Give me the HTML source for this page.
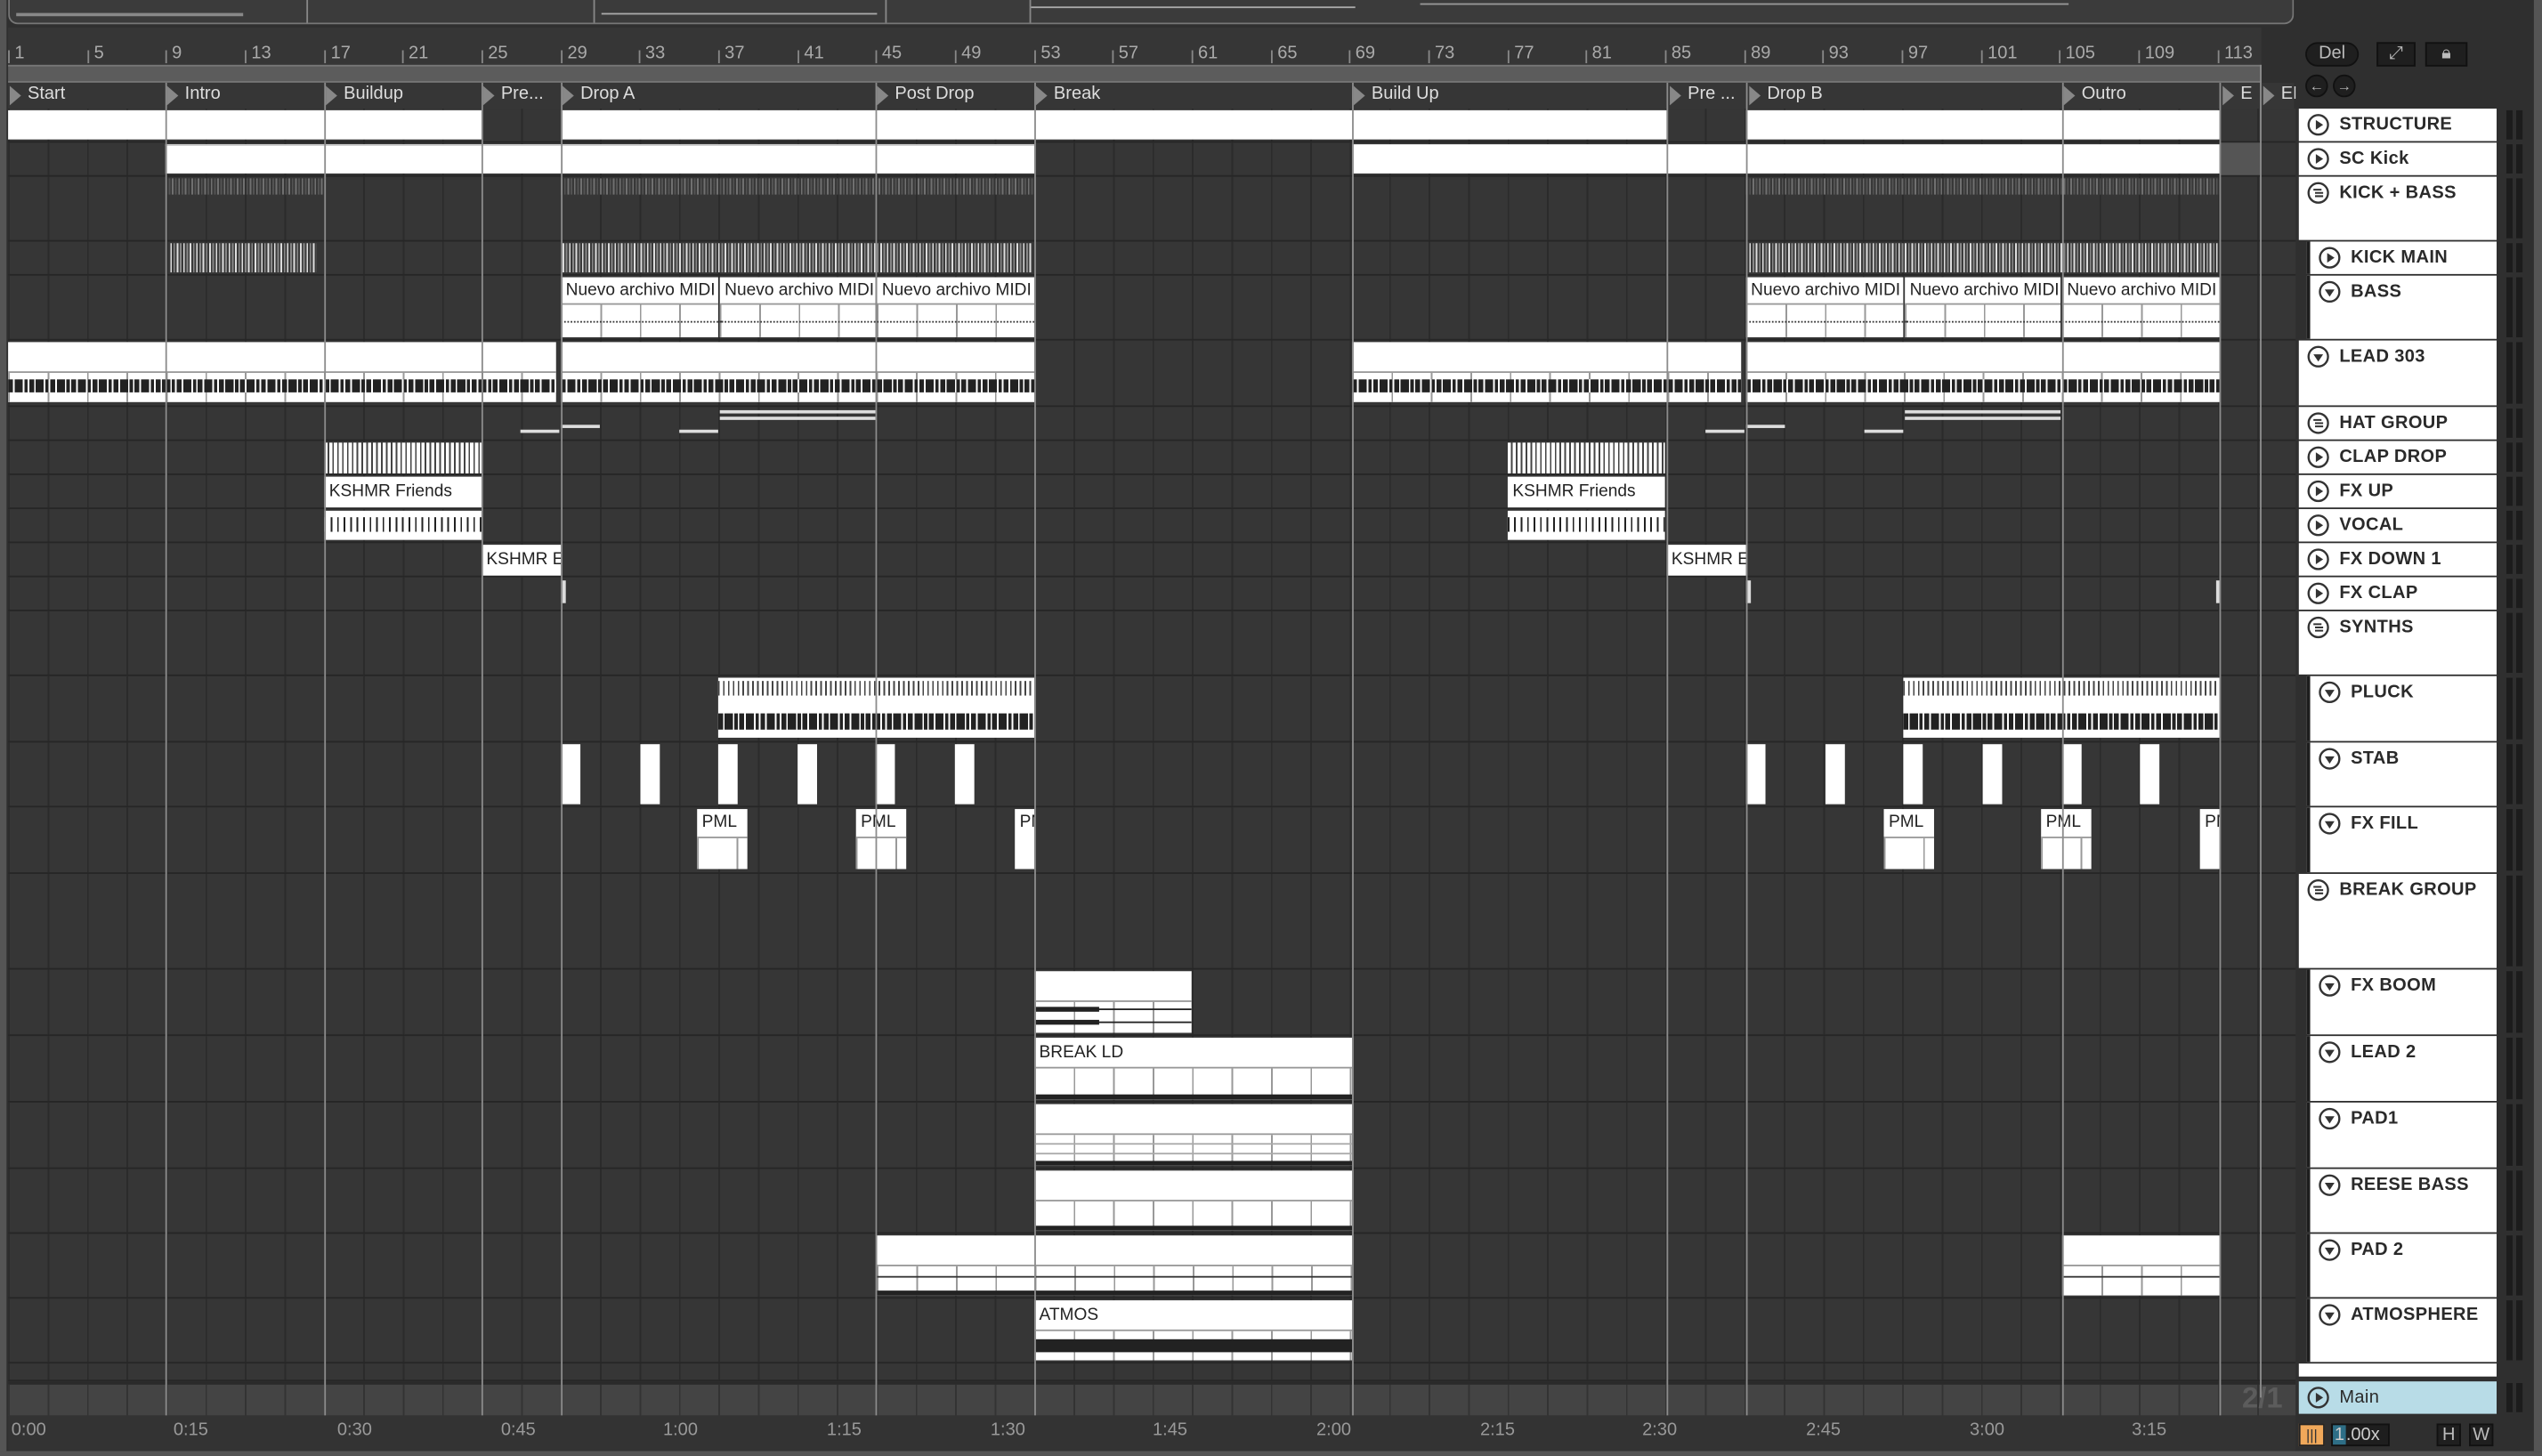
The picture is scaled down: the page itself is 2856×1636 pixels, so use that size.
<!DOCTYPE html>
<html><head><meta charset="utf-8"><style>
*{margin:0;padding:0;box-sizing:border-box}
html,body{width:2856px;height:1636px;overflow:hidden;background:#2a2a2a}
#w{position:absolute;left:0;top:0;width:1568px;height:898px;transform:scale(1.82143,1.8218);transform-origin:0 0;background:#2f2f2f;font-family:"Liberation Sans",sans-serif;overflow:hidden}
.a{position:absolute}
.ov{left:5px;top:0;width:1410px;height:15px;background:#3b3b3b;border:1px solid #777;border-top:none;border-radius:0 0 6px 6px}
.ruler{left:5px;top:17px;width:1390px;height:23px;background:#363636}
.rn{position:absolute;top:10px;font-size:11px;color:#aaa}
.rt{position:absolute;top:14px;width:1px;height:8px;background:#888}
.loop{left:5px;top:40px;width:1390px;height:11px;background:#5c5c5c;border-top:1px solid #777;border-bottom:1px solid #777}
.loc{left:5px;top:51px;width:1410px;height:16px;background:#363636}
.lm{position:absolute;top:0;height:15px;font-size:11px;color:#ddd;padding-left:12px;line-height:15px;white-space:nowrap;overflow:hidden}
.lm:before{content:"";position:absolute;left:1px;top:2px;border-left:7px solid #888;border-top:6px solid transparent;border-bottom:6px solid transparent}
.arr{left:5px;top:67px;width:1411px;height:785px;background:#363636}
.row{position:absolute;left:0;width:1411px;background:repeating-linear-gradient(90deg,#2b2b2b 0 1px,transparent 1px 24.34px);border-bottom:1px solid #262626}
.c{position:absolute;background:#fff;overflow:hidden}
.lb{font-size:10.5px;color:#222;padding:2px 0 0 3px;white-space:nowrap;line-height:12px}
.gl{position:absolute;left:0;right:0;bottom:0;background:repeating-linear-gradient(90deg,#999 0 1px,transparent 1px 24.34px)}
.st{background:repeating-linear-gradient(90deg,#ddd 0 1px,#3a3a3a 1px 2px,#888 2px 3px,#3a3a3a 3px 4px)}
.bc{position:absolute;left:0;right:0;background:repeating-linear-gradient(90deg,#222 0 3px,#fff 3px 4px,#222 4px 9px,#fff 9px 10px,#222 10px 12px,#fff 12px 13px)}
.vl{position:absolute;top:51px;width:1px;height:822px;background:#8c8c8c}
.hd{position:absolute;left:1418px;width:122px;background:#fff;font-size:11px;font-weight:bold;color:#2a2a2a;line-height:20px;letter-spacing:.2px}
.hd svg{position:absolute;left:5px;top:3px}
.hd span{position:absolute;left:25px;top:0}
.in{left:1423px;width:117px;border-left:2px solid #1e1e1e}
.mt{position:absolute;left:1546px;width:10px;background:linear-gradient(90deg,#1c1c1c 0 4px,transparent 4px 6px,#1c1c1c 6px 10px)}
.bt{position:absolute;background:#1f1f1f;border:1px solid #111;color:#bbb;font-size:11px;text-align:center;line-height:13px}
.tl{position:absolute;top:876px;font-size:11px;color:#999}
</style></head><body><div id="w">
<div class="a" style="left:0;top:0;width:4px;height:898px;background:#555"></div>
<div class="a ov">
<div class="a" style="left:183px;top:0;width:178px;height:14px;border-left:1px solid #888;border-right:1px solid #888"></div>
<div class="a" style="left:540px;top:0;width:90px;height:14px;border-left:1px solid #888;border-right:1px solid #888"></div>
<div class="a" style="left:4px;top:8px;width:140px;height:2px;background:#888"></div>
<div class="a" style="left:365px;top:8px;width:170px;height:1px;background:#aaa"></div>
<div class="a" style="left:630px;top:4px;width:200px;height:1px;background:#aaa"></div>
<div class="a" style="left:870px;top:2px;width:400px;height:1px;background:#999"></div>
</div>
<div class="a ruler">
<div class="rt" style="left:0"></div><div class="rn" style="left:4px">1</div>
<div class="rt" style="left:49px"></div><div class="rn" style="left:53px">5</div>
<div class="rt" style="left:97px"></div><div class="rn" style="left:101px">9</div>
<div class="rt" style="left:146px"></div><div class="rn" style="left:150px">13</div>
<div class="rt" style="left:195px"></div><div class="rn" style="left:199px">17</div>
<div class="rt" style="left:243px"></div><div class="rn" style="left:247px">21</div>
<div class="rt" style="left:292px"></div><div class="rn" style="left:296px">25</div>
<div class="rt" style="left:341px"></div><div class="rn" style="left:345px">29</div>
<div class="rt" style="left:389px"></div><div class="rn" style="left:393px">33</div>
<div class="rt" style="left:438px"></div><div class="rn" style="left:442px">37</div>
<div class="rt" style="left:487px"></div><div class="rn" style="left:491px">41</div>
<div class="rt" style="left:535px"></div><div class="rn" style="left:539px">45</div>
<div class="rt" style="left:584px"></div><div class="rn" style="left:588px">49</div>
<div class="rt" style="left:633px"></div><div class="rn" style="left:637px">53</div>
<div class="rt" style="left:681px"></div><div class="rn" style="left:685px">57</div>
<div class="rt" style="left:730px"></div><div class="rn" style="left:734px">61</div>
<div class="rt" style="left:779px"></div><div class="rn" style="left:783px">65</div>
<div class="rt" style="left:827px"></div><div class="rn" style="left:831px">69</div>
<div class="rt" style="left:876px"></div><div class="rn" style="left:880px">73</div>
<div class="rt" style="left:925px"></div><div class="rn" style="left:929px">77</div>
<div class="rt" style="left:973px"></div><div class="rn" style="left:977px">81</div>
<div class="rt" style="left:1022px"></div><div class="rn" style="left:1026px">85</div>
<div class="rt" style="left:1071px"></div><div class="rn" style="left:1075px">89</div>
<div class="rt" style="left:1119px"></div><div class="rn" style="left:1123px">93</div>
<div class="rt" style="left:1168px"></div><div class="rn" style="left:1172px">97</div>
<div class="rt" style="left:1217px"></div><div class="rn" style="left:1221px">101</div>
<div class="rt" style="left:1265px"></div><div class="rn" style="left:1269px">105</div>
<div class="rt" style="left:1314px"></div><div class="rn" style="left:1318px">109</div>
<div class="rt" style="left:1363px"></div><div class="rn" style="left:1367px">113</div>
</div>
<div class="a loop"></div>
<div class="a loc">
<div class="lm" style="left:0;width:97px">Start</div>
<div class="lm" style="left:97px;width:97px">Intro</div>
<div class="lm" style="left:195px;width:97px">Buildup</div>
<div class="lm" style="left:292px;width:49px">Pre...</div>
<div class="lm" style="left:341px;width:194px">Drop A</div>
<div class="lm" style="left:535px;width:98px">Post Drop</div>
<div class="lm" style="left:633px;width:194px">Break</div>
<div class="lm" style="left:829px;width:193px">Build Up</div>
<div class="lm" style="left:1024px;width:49px">Pre ...</div>
<div class="lm" style="left:1073px;width:193px">Drop B</div>
<div class="lm" style="left:1267px;width:97px">Outro</div>
<div class="lm" style="left:1365px;width:24px">E</div>
<div class="lm" style="left:1390px;width:21px">EN</div>
</div>

<div class="a arr">
<div class="row" style="top:0;height:21px"><div class="c" style="left:0;width:292px;top:1px;height:18px"></div><div class="c" style="left:341px;width:682px;top:1px;height:18px"></div><div class="c" style="left:1072px;width:292px;top:1px;height:18px"></div></div>
<div class="row" style="top:21px;height:21px"><div class="c" style="left:97px;width:536px;top:1px;height:18px;border-top:1px solid #ccc"></div><div class="c" style="left:829px;width:535px;top:1px;height:18px"></div><div class="a" style="left:1364px;width:25px;top:0;height:20px;background:#555"></div></div>
<div class="row" style="top:42px;height:40px"><div class="a st" style="left:97px;width:97px;top:1px;height:10px;opacity:.35"></div><div class="a st" style="left:341px;width:292px;top:1px;height:10px;opacity:.35"></div><div class="a st" style="left:1072px;width:292px;top:1px;height:10px;opacity:.35"></div></div>
<div class="row" style="top:82px;height:21px"><div class="a st" style="left:100px;width:90px;top:1px;height:18px"></div><div class="a st" style="left:342px;width:290px;top:1px;height:18px"></div><div class="a st" style="left:1074px;width:289px;top:1px;height:18px"></div></div>
<div class="row" style="top:103px;height:40px">
<div class="c" style="left:341px;width:97px;top:1px;height:37px"><div class="lb">Nuevo archivo MIDI</div><div class="gl" style="top:16px;border-top:1px solid #999"></div><div class="a" style="left:0;right:0;top:27px;border-top:1px dotted #333"></div></div>
<div class="c" style="left:439px;width:96px;top:1px;height:37px"><div class="lb">Nuevo archivo MIDI</div><div class="gl" style="top:16px;border-top:1px solid #999"></div><div class="a" style="left:0;right:0;top:27px;border-top:1px dotted #333"></div></div>
<div class="c" style="left:536px;width:97px;top:1px;height:37px"><div class="lb">Nuevo archivo MIDI</div><div class="gl" style="top:16px;border-top:1px solid #999"></div><div class="a" style="left:0;right:0;top:27px;border-top:1px dotted #333"></div></div>
<div class="c" style="left:1072px;width:97px;top:1px;height:37px"><div class="lb">Nuevo archivo MIDI</div><div class="gl" style="top:16px;border-top:1px solid #999"></div><div class="a" style="left:0;right:0;top:27px;border-top:1px dotted #333"></div></div>
<div class="c" style="left:1170px;width:96px;top:1px;height:37px"><div class="lb">Nuevo archivo MIDI</div><div class="gl" style="top:16px;border-top:1px solid #999"></div><div class="a" style="left:0;right:0;top:27px;border-top:1px dotted #333"></div></div>
<div class="c" style="left:1267px;width:97px;top:1px;height:37px"><div class="lb">Nuevo archivo MIDI</div><div class="gl" style="top:16px;border-top:1px solid #999"></div><div class="a" style="left:0;right:0;top:27px;border-top:1px dotted #333"></div></div>
</div>
<div class="row" style="top:143px;height:41px">
<div class="c" style="left:0;width:338px;top:1px;height:37px"><div class="gl" style="top:18px;border-top:1px solid #999"></div><div class="bc" style="top:23px;height:8px"></div></div>
<div class="c" style="left:341px;width:292px;top:1px;height:37px"><div class="gl" style="top:18px;border-top:1px solid #999"></div><div class="bc" style="top:23px;height:8px"></div></div>
<div class="c" style="left:829px;width:240px;top:1px;height:37px"><div class="gl" style="top:18px;border-top:1px solid #999"></div><div class="bc" style="top:23px;height:8px"></div></div>
<div class="c" style="left:1072px;width:292px;top:1px;height:37px"><div class="gl" style="top:18px;border-top:1px solid #999"></div><div class="bc" style="top:23px;height:8px"></div></div>
</div>
<div class="row" style="top:184px;height:21px"><div class="a" style="left:316px;width:24px;top:14px;height:2px;background:#ddd"></div><div class="a" style="left:341px;width:24px;top:11px;height:2px;background:#ddd"></div><div class="a" style="left:414px;width:24px;top:14px;height:2px;background:#ddd"></div><div class="a" style="left:439px;width:96px;top:2px;height:2px;background:#ddd"></div><div class="a" style="left:439px;width:96px;top:6px;height:2px;background:#ddd"></div><div class="a" style="left:1047px;width:24px;top:14px;height:2px;background:#ddd"></div><div class="a" style="left:1072px;width:24px;top:11px;height:2px;background:#ddd"></div><div class="a" style="left:1145px;width:24px;top:14px;height:2px;background:#ddd"></div><div class="a" style="left:1170px;width:96px;top:2px;height:2px;background:#ddd"></div><div class="a" style="left:1170px;width:96px;top:6px;height:2px;background:#ddd"></div></div>
<div class="row" style="top:205px;height:21px"><div class="a st" style="left:195px;width:97px;top:1px;height:19px;background:repeating-linear-gradient(90deg,#fff 0 2px,#444 2px 3px)"></div><div class="a" style="left:925px;width:97px;top:1px;height:19px;background:repeating-linear-gradient(90deg,#fff 0 2px,#444 2px 3px)"></div></div>
<div class="row" style="top:226px;height:21px"><div class="c" style="left:195px;width:97px;top:1px;height:19px"><div class="lb" style="padding-top:3px">KSHMR Friends</div></div><div class="c" style="left:925px;width:97px;top:1px;height:19px"><div class="lb" style="padding-top:3px">KSHMR Friends</div></div></div>
<div class="row" style="top:247px;height:21px"><div class="a" style="left:195px;width:97px;top:1px;height:18px;background:#fff"><div class="bc" style="top:4px;height:9px;background:repeating-linear-gradient(90deg,#222 0 1px,#fff 1px 4px)"></div></div><div class="a" style="left:925px;width:97px;top:1px;height:18px;background:#fff"><div class="bc" style="top:4px;height:9px;background:repeating-linear-gradient(90deg,#222 0 1px,#fff 1px 4px)"></div></div></div>
<div class="row" style="top:268px;height:21px"><div class="c" style="left:292px;width:49px;top:1px;height:19px"><div class="lb" style="padding-top:3px">KSHMR E</div></div><div class="c" style="left:1023px;width:49px;top:1px;height:19px"><div class="lb" style="padding-top:3px">KSHMR E</div></div></div>
<div class="row" style="top:289px;height:21px"><div class="a" style="left:341px;width:3px;top:2px;height:14px;background:#ddd"></div><div class="a" style="left:1072px;width:3px;top:2px;height:14px;background:#ddd"></div><div class="a" style="left:1362px;width:2px;top:2px;height:14px;background:#ddd"></div></div>
<div class="row" style="top:310px;height:40px"></div>
<div class="row" style="top:350px;height:41px">
<div class="c" style="left:438px;width:195px;top:1px;height:37px"><div class="a" style="left:0;right:0;top:2px;height:9px;background:repeating-linear-gradient(90deg,#444 0 1px,#fff 1px 3px)"></div><div class="bc" style="top:22px;height:10px"></div></div>
<div class="c" style="left:1169px;width:195px;top:1px;height:37px"><div class="a" style="left:0;right:0;top:2px;height:9px;background:repeating-linear-gradient(90deg,#444 0 1px,#fff 1px 3px)"></div><div class="bc" style="top:22px;height:10px"></div></div>
</div>
<div class="row" style="top:391px;height:40px">
<div class="c" style="left:341px;width:12px;top:1px;height:37px"></div><div class="c" style="left:390px;width:12px;top:1px;height:37px"></div><div class="c" style="left:438px;width:12px;top:1px;height:37px"></div><div class="c" style="left:487px;width:12px;top:1px;height:37px"></div><div class="c" style="left:535px;width:12px;top:1px;height:37px"></div><div class="c" style="left:584px;width:12px;top:1px;height:37px"></div>
<div class="c" style="left:1072px;width:12px;top:1px;height:37px"></div><div class="c" style="left:1121px;width:12px;top:1px;height:37px"></div><div class="c" style="left:1169px;width:12px;top:1px;height:37px"></div><div class="c" style="left:1218px;width:12px;top:1px;height:37px"></div><div class="c" style="left:1267px;width:12px;top:1px;height:37px"></div><div class="c" style="left:1315px;width:12px;top:1px;height:37px"></div>
</div>
<div class="row" style="top:431px;height:41px">
<div class="c" style="left:425px;width:31px;top:1px;height:37px"><div class="lb">PML</div><div class="gl" style="top:17px;border-top:1px solid #999"></div></div>
<div class="c" style="left:523px;width:31px;top:1px;height:37px"><div class="lb">PML</div><div class="gl" style="top:17px;border-top:1px solid #999"></div></div>
<div class="c" style="left:621px;width:12px;top:1px;height:37px"><div class="lb">PML</div></div>
<div class="c" style="left:1157px;width:31px;top:1px;height:37px"><div class="lb">PML</div><div class="gl" style="top:17px;border-top:1px solid #999"></div></div>
<div class="c" style="left:1254px;width:31px;top:1px;height:37px"><div class="lb">PML</div><div class="gl" style="top:17px;border-top:1px solid #999"></div></div>
<div class="c" style="left:1352px;width:12px;top:1px;height:37px"><div class="lb">PML</div></div>
</div>
<div class="row" style="top:472px;height:59px"></div>
<div class="row" style="top:531px;height:41px"><div class="c" style="left:633px;width:97px;top:1px;height:38px"><div class="gl" style="top:18px;border-top:1px solid #999"></div><div class="a" style="left:0;width:40px;top:22px;height:3px;background:#222"></div><div class="a" style="left:0;width:97px;top:23px;height:1px;background:#222"></div><div class="a" style="left:0;width:40px;top:30px;height:3px;background:#222"></div><div class="a" style="left:0;width:97px;top:31px;height:1px;background:#222"></div></div></div>
<div class="row" style="top:572px;height:41px"><div class="c" style="left:633px;width:196px;top:1px;height:38px"><div class="lb" style="padding-top:3px">BREAK LD</div><div class="gl" style="top:18px;border-top:1px solid #999"></div><div class="a" style="left:0;right:0;bottom:0;height:3px;background:#222"></div></div></div>
<div class="row" style="top:613px;height:41px"><div class="c" style="left:633px;width:196px;top:1px;height:38px"><div class="gl" style="top:18px;border-top:1px solid #999"></div><div class="a" style="left:0;right:0;top:24px;height:1px;background:#aaa"></div><div class="a" style="left:0;right:0;top:30px;height:1px;background:#aaa"></div><div class="a" style="left:0;right:0;bottom:0;height:3px;background:#222"></div></div></div>
<div class="row" style="top:654px;height:40px"><div class="c" style="left:633px;width:196px;top:1px;height:37px"><div class="gl" style="top:18px;border-top:1px solid #999"></div><div class="a" style="left:0;right:0;bottom:0;height:3px;background:#222"></div></div></div>
<div class="row" style="top:694px;height:40px"><div class="c" style="left:536px;width:293px;top:1px;height:37px"><div class="gl" style="top:18px;border-top:1px solid #999"></div><div class="a" style="left:0;right:0;top:25px;height:1px;background:#333"></div><div class="a" style="left:0;right:0;bottom:0;height:3px;background:#222"></div></div><div class="c" style="left:1267px;width:97px;top:1px;height:37px"><div class="gl" style="top:18px;border-top:1px solid #999"></div><div class="a" style="left:0;right:0;top:25px;height:1px;background:#333"></div></div></div>
<div class="row" style="top:734px;height:40px"><div class="c" style="left:633px;width:196px;top:1px;height:37px"><div class="lb" style="padding-top:3px">ATMOS</div><div class="gl" style="top:18px;border-top:1px solid #999"></div><div class="a" style="left:0;right:0;top:24px;height:8px;background:#222"></div></div></div>
<div class="row" style="top:774px;height:11px"></div>
</div>
<div class="a" style="left:5px;top:852px;width:1411px;height:21px;background:#444 repeating-linear-gradient(90deg,#333 0 1px,transparent 1px 24.34px);border-top:2px solid #2a2a2a"></div>
<div class="a" style="left:1383px;top:852px;font-size:18px;font-weight:bold;color:#5c5c5c">2/1</div>
<div class="vl" style="left:102px"></div><div class="vl" style="left:200px"></div><div class="vl" style="left:297px"></div><div class="vl" style="left:346px"></div><div class="vl" style="left:540px"></div><div class="vl" style="left:638px"></div><div class="vl" style="left:834px"></div><div class="vl" style="left:1028px"></div><div class="vl" style="left:1077px"></div><div class="vl" style="left:1272px"></div><div class="vl" style="left:1369px"></div><div class="vl" style="left:1394px;top:40px"></div>

<div class="a" style="left:5px;top:873px;width:1411px;height:22px;background:#333"></div>
<div class="tl" style="left:7px">0:00</div><div class="tl" style="left:107px">0:15</div><div class="tl" style="left:208px">0:30</div><div class="tl" style="left:309px">0:45</div><div class="tl" style="left:409px">1:00</div><div class="tl" style="left:510px">1:15</div><div class="tl" style="left:611px">1:30</div><div class="tl" style="left:711px">1:45</div><div class="tl" style="left:812px">2:00</div><div class="tl" style="left:913px">2:15</div><div class="tl" style="left:1013px">2:30</div><div class="tl" style="left:1114px">2:45</div><div class="tl" style="left:1215px">3:00</div><div class="tl" style="left:1315px">3:15</div>

<div class="bt" style="left:1422px;top:26px;width:33px;height:15px;border-radius:8px">Del</div>
<div class="bt" style="left:1466px;top:26px;width:24px;height:15px">⤢</div>
<div class="bt" style="left:1496px;top:26px;width:26px;height:15px">🔒︎</div>
<div class="bt" style="left:1422px;top:46px;width:14px;height:14px;border-radius:7px;font-size:9px;line-height:12px">←</div>
<div class="bt" style="left:1439px;top:46px;width:14px;height:14px;border-radius:7px;font-size:9px;line-height:12px">→</div>

<svg width="0" height="0" style="position:absolute"><defs>
<g id="p"><circle cx="7" cy="7" r="6" fill="none" stroke="#333" stroke-width="1.3"/><path d="M5.5 4v6l4.5-3z" fill="#333"/></g>
<g id="d"><circle cx="7" cy="7" r="6" fill="none" stroke="#333" stroke-width="1.3"/><path d="M4 5.5h6l-3 4.5z" fill="#333"/></g>
<g id="g"><circle cx="7" cy="7" r="6" fill="none" stroke="#333" stroke-width="1.3"/><path d="M4 5h5M5 7h5M5 9h5" stroke="#333" stroke-width="1.1"/></g>
</defs></svg>

<div class="hd" style="top:67px;height:20px"><svg width="14" height="14"><use href="#p"/></svg><span>STRUCTURE</span></div>
<div class="hd" style="top:88px;height:20px"><svg width="14" height="14"><use href="#p"/></svg><span>SC Kick</span></div>
<div class="hd" style="top:109px;height:39px"><svg width="14" height="14"><use href="#g"/></svg><span>KICK + BASS</span></div>
<div class="hd in" style="top:149px;height:20px"><svg width="14" height="14"><use href="#p"/></svg><span>KICK MAIN</span></div>
<div class="hd in" style="top:170px;height:39px"><svg width="14" height="14"><use href="#d"/></svg><span>BASS</span></div>
<div class="hd" style="top:210px;height:40px"><svg width="14" height="14"><use href="#d"/></svg><span>LEAD 303</span></div>
<div class="hd" style="top:251px;height:20px"><svg width="14" height="14"><use href="#g"/></svg><span>HAT GROUP</span></div>
<div class="hd" style="top:272px;height:20px"><svg width="14" height="14"><use href="#p"/></svg><span>CLAP DROP</span></div>
<div class="hd" style="top:293px;height:20px"><svg width="14" height="14"><use href="#p"/></svg><span>FX UP</span></div>
<div class="hd" style="top:314px;height:20px"><svg width="14" height="14"><use href="#p"/></svg><span>VOCAL</span></div>
<div class="hd" style="top:335px;height:20px"><svg width="14" height="14"><use href="#p"/></svg><span>FX DOWN 1</span></div>
<div class="hd" style="top:356px;height:20px"><svg width="14" height="14"><use href="#p"/></svg><span>FX CLAP</span></div>
<div class="hd" style="top:377px;height:39px"><svg width="14" height="14"><use href="#g"/></svg><span>SYNTHS</span></div>
<div class="hd in" style="top:417px;height:40px"><svg width="14" height="14"><use href="#d"/></svg><span>PLUCK</span></div>
<div class="hd in" style="top:458px;height:39px"><svg width="14" height="14"><use href="#d"/></svg><span>STAB</span></div>
<div class="hd in" style="top:498px;height:40px"><svg width="14" height="14"><use href="#d"/></svg><span>FX FILL</span></div>
<div class="hd" style="top:539px;height:58px"><svg width="14" height="14"><use href="#g"/></svg><span>BREAK GROUP</span></div>
<div class="hd in" style="top:598px;height:40px"><svg width="14" height="14"><use href="#d"/></svg><span>FX BOOM</span></div>
<div class="hd in" style="top:639px;height:40px"><svg width="14" height="14"><use href="#d"/></svg><span>LEAD 2</span></div>
<div class="hd in" style="top:680px;height:40px"><svg width="14" height="14"><use href="#d"/></svg><span>PAD1</span></div>
<div class="hd in" style="top:721px;height:39px"><svg width="14" height="14"><use href="#d"/></svg><span>REESE BASS</span></div>
<div class="hd in" style="top:761px;height:39px"><svg width="14" height="14"><use href="#d"/></svg><span>PAD 2</span></div>
<div class="hd in" style="top:801px;height:39px"><svg width="14" height="14"><use href="#d"/></svg><span>ATMOSPHERE</span></div>
<div class="hd" style="top:841px;height:8px;overflow:hidden"></div>
<div class="hd" style="top:852px;height:20px;background:#b8dce7;font-weight:normal"><svg width="14" height="14"><use href="#p"/></svg><span>Main</span></div>

<div class="mt" style="top:68px;height:18px"></div><div class="mt" style="top:89px;height:18px"></div><div class="mt" style="top:110px;height:37px"></div><div class="mt" style="top:150px;height:18px"></div><div class="mt" style="top:171px;height:37px"></div><div class="mt" style="top:211px;height:38px"></div><div class="mt" style="top:252px;height:18px"></div><div class="mt" style="top:273px;height:18px"></div><div class="mt" style="top:294px;height:18px"></div><div class="mt" style="top:315px;height:18px"></div><div class="mt" style="top:336px;height:18px"></div><div class="mt" style="top:357px;height:18px"></div><div class="mt" style="top:378px;height:37px"></div><div class="mt" style="top:418px;height:38px"></div><div class="mt" style="top:459px;height:37px"></div><div class="mt" style="top:499px;height:38px"></div><div class="mt" style="top:540px;height:56px"></div><div class="mt" style="top:599px;height:38px"></div><div class="mt" style="top:640px;height:38px"></div><div class="mt" style="top:681px;height:38px"></div><div class="mt" style="top:722px;height:37px"></div><div class="mt" style="top:762px;height:37px"></div><div class="mt" style="top:802px;height:37px"></div><div class="mt" style="top:853px;height:18px"></div>

<div class="a" style="left:1418px;top:878px;width:16px;height:14px;background:#f0a85a;border:1px solid #222;font-size:9px;text-align:center;line-height:12px;color:#333">|||</div>
<div class="a" style="left:1438px;top:878px;width:36px;height:14px;background:#1e1e1e;border:1px solid #111;font-size:11px;color:#ccc;line-height:12px"><span style="background:#2e6e86;padding:0 1px">1</span>.00x</div>
<div class="bt" style="left:1503px;top:878px;width:15px;height:14px">H</div>
<div class="bt" style="left:1523px;top:878px;width:15px;height:14px">W</div>
<div class="a" style="left:1563px;top:0;width:5px;height:898px;background:#555"></div>
<div class="a" style="left:0;top:895px;width:1568px;height:3px;background:#555"></div>
</div></body></html>
